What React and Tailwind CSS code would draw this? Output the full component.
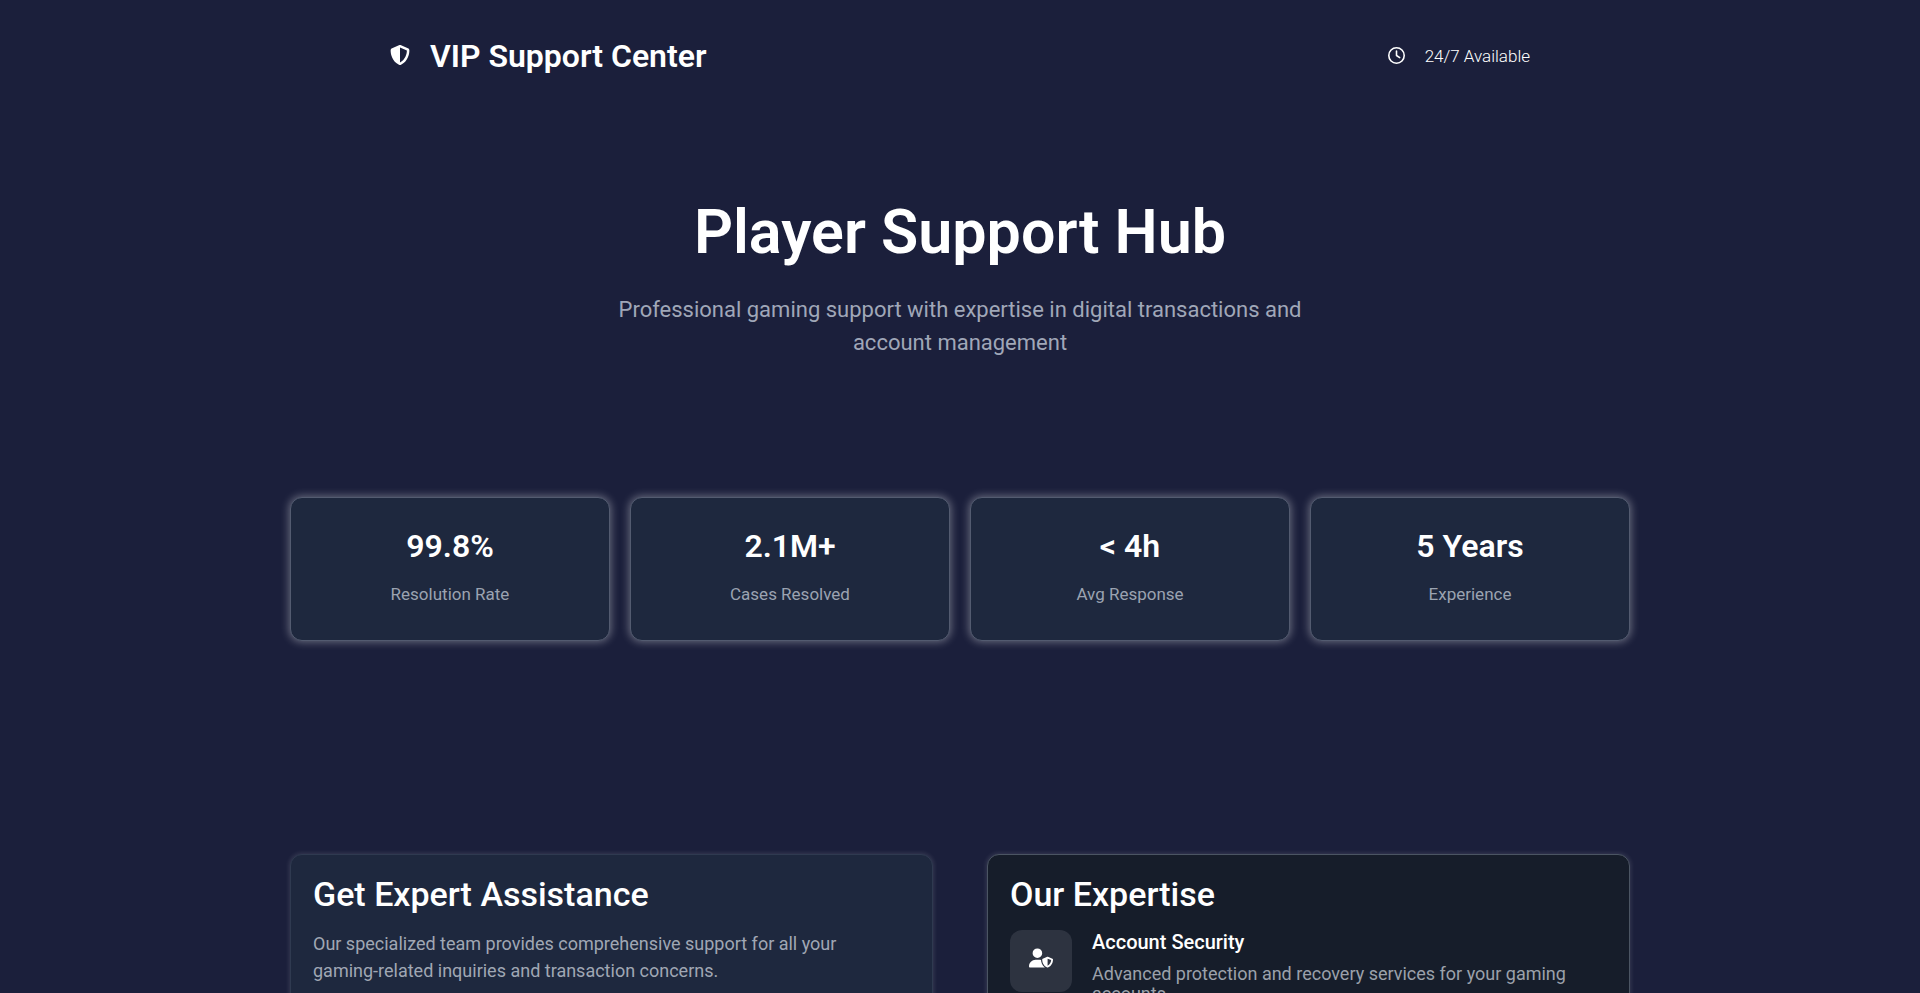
import { FaShieldHalved, FaRegClock, FaUserShield } from "react-icons/fa6";

const stats = [
  { value: "99.8%", label: "Resolution Rate" },
  { value: "2.1M+", label: "Cases Resolved" },
  { value: "< 4h", label: "Avg Response" },
  { value: "5 Years", label: "Experience" },
];

function Header() {
  return (
    <header className="mx-auto flex w-full max-w-[1200px] items-center justify-between px-[30px] py-8">
      <div className="flex items-center gap-5">
        <span className="pb-0.5">
          <FaShieldHalved className="size-5" aria-hidden="true" />
        </span>
        <span className="text-[32px] leading-[48px] font-semibold">VIP Support Center</span>
      </div>
      <div className="flex items-center gap-5 text-[17px] leading-6 font-light">
        <span className="pb-0.5">
          <FaRegClock className="size-[17px]" aria-hidden="true" />
        </span>
        <span>24/7 Available</span>
      </div>
    </header>
  );
}

function Hero() {
  return (
    <section className="mx-auto flex max-w-[760px] flex-col items-center gap-[21px] px-6 pt-20 text-center">
      <h1 className="text-[61px] leading-[80px] font-semibold">Player Support Hub</h1>
      <p className="text-[22px] leading-[33px] text-[#a0a7b8]">
        Professional gaming support with expertise in digital transactions and account management
      </p>
    </section>
  );
}

function Stats() {
  return (
    <section className="grid grid-cols-2 gap-5 lg:grid-cols-4">
      {stats.map((s) => (
        <div
          key={s.label}
          className="flex flex-col items-center gap-3 rounded-xl border border-[#535b70] bg-[#1e283e] px-5 pt-6 pb-[34px] shadow-[0_0_8px_1px_rgba(255,255,255,0.35)]"
        >
          <p className="text-[32px] leading-[48px] font-semibold">{s.value}</p>
          <p className="text-[17px] leading-6 text-[#9ba3b1]">{s.label}</p>
        </div>
      ))}
    </section>
  );
}

function Panels() {
  return (
    <section className="grid grid-cols-1 gap-[54px] lg:grid-cols-2">
      <article className="rounded-xl border border-[#2f3a50] bg-[#1e283e] px-[22px] pt-[15px] pb-8 shadow-[0_0_4px_1px_rgba(255,255,255,0.12)]">
        <h2 className="text-[34px] leading-[48px] font-medium">Get Expert Assistance</h2>
        <p className="mt-3 max-w-[560px] text-[18px] leading-[27px] text-[#a0a7b4]">
          Our specialized team provides comprehensive support for all your gaming-related inquiries and
          transaction concerns.
        </p>
      </article>
      <article className="rounded-xl border border-[#4b5563] bg-[#161d2a] px-[22px] pt-[15px] pb-8 shadow-[0_0_4px_1px_rgba(255,255,255,0.12)]">
        <h2 className="text-[34px] leading-[48px] font-medium">Our Expertise</h2>
        <div className="mt-3 flex items-start gap-5">
          <div className="flex size-[62px] shrink-0 items-center justify-center rounded-xl bg-[#2d3340] pb-1.5">
            <FaUserShield className="size-6" aria-hidden="true" />
          </div>
          <div>
            <h3 className="text-[20px] leading-6 font-medium">Account Security</h3>
            <p className="mt-2.5 text-[18px] leading-5 text-[#9ba1ab]">
              Advanced protection and recovery services for your gaming accounts.
            </p>
          </div>
        </div>
      </article>
    </section>
  );
}

export default function App() {
  return (
    <div className="h-screen overflow-hidden bg-[#1b1f3b] font-['Roboto',sans-serif] text-white">
      <Header />
      <main>
        <Hero />
        <div className="mx-auto flex max-w-[1400px] flex-col gap-[213px] px-[30px] pt-[138px]">
          <Stats />
          <Panels />
        </div>
      </main>
    </div>
  );
}
